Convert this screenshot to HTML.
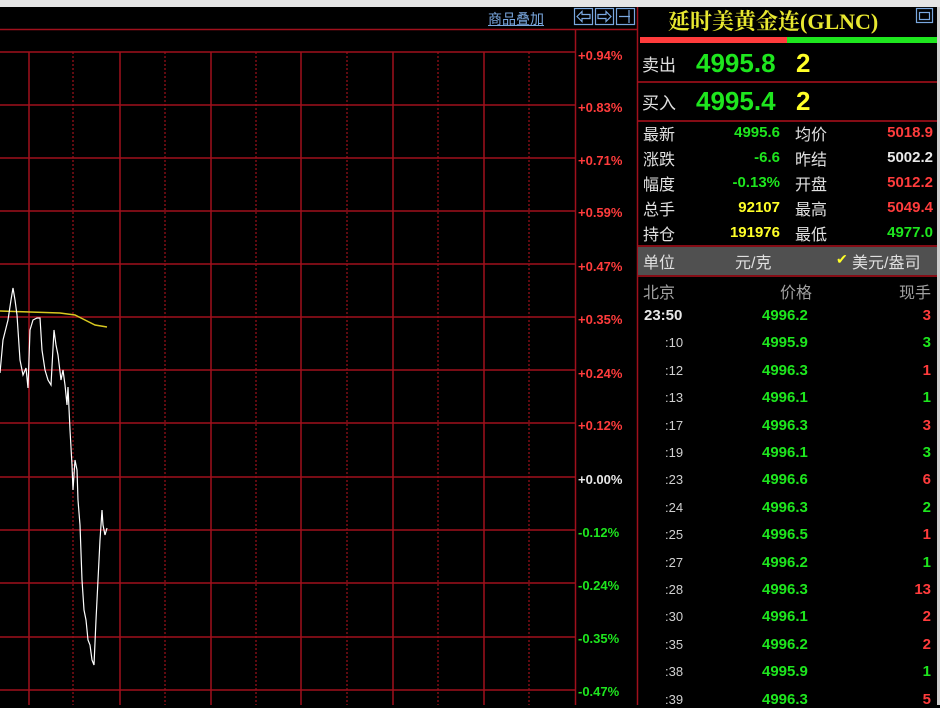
<!DOCTYPE html>
<html><head><meta charset="utf-8"><style>
body{margin:0;width:940px;height:705px;background:#000;overflow:hidden;position:relative;font-family:"Liberation Sans","Noto Sans CJK SC",sans-serif}
.a{position:absolute;white-space:nowrap}
.lbl{position:absolute;left:578px;font-size:13px;font-weight:bold}
.r{color:#ff3c3c}.g{color:#1ee61e}.y{color:#ffff28}.w{color:#e8e8e8}
.row{position:absolute;left:640px;width:295px;height:25px;font-size:16px;color:#e0e0e0}
.tk{position:absolute;left:640px;width:295px;font-size:15px;font-weight:bold}
</style></head><body>
<div class="a" style="left:0;top:0;width:940px;height:7px;background:#e6e6e6"></div>
<div class="a" style="left:937px;top:7px;width:3px;height:698px;background:#cfcfcf"></div>
<svg class="a" style="left:0;top:0" width="940" height="705">
<g stroke="#a0101c" stroke-width="1.5">
<line x1="0" y1="29.5" x2="637" y2="29.5"/>
<line x1="575.5" y1="29" x2="575.5" y2="705"/>
<line x1="637.5" y1="7" x2="637.5" y2="705"/>
<line x1="0" y1="52" x2="575" y2="52"/><line x1="0" y1="105" x2="575" y2="105"/><line x1="0" y1="158" x2="575" y2="158"/><line x1="0" y1="211" x2="575" y2="211"/><line x1="0" y1="264" x2="575" y2="264"/><line x1="0" y1="317" x2="575" y2="317"/><line x1="0" y1="370" x2="575" y2="370"/><line x1="0" y1="423" x2="575" y2="423"/><line x1="0" y1="477" x2="575" y2="477"/><line x1="0" y1="530" x2="575" y2="530"/><line x1="0" y1="583" x2="575" y2="583"/><line x1="0" y1="637" x2="575" y2="637"/><line x1="0" y1="690" x2="575" y2="690"/>
<line x1="29" y1="52" x2="29" y2="705"/><line x1="120" y1="52" x2="120" y2="705"/><line x1="211" y1="52" x2="211" y2="705"/><line x1="301" y1="52" x2="301" y2="705"/><line x1="393" y1="52" x2="393" y2="705"/><line x1="484" y1="52" x2="484" y2="705"/>
</g>
<g stroke="#a0101c" stroke-width="1.2" stroke-dasharray="2,2">
<line x1="73" y1="52" x2="73" y2="705"/><line x1="165" y1="52" x2="165" y2="705"/><line x1="256" y1="52" x2="256" y2="705"/><line x1="347" y1="52" x2="347" y2="705"/><line x1="438" y1="52" x2="438" y2="705"/><line x1="529" y1="52" x2="529" y2="705"/>
</g>
<polyline fill="none" stroke="#d8c820" stroke-width="1.5" points="0,311 60,313 75,315 85,320 95,325 107,327"/>
<polyline fill="none" stroke="#fff" stroke-width="1.2" points="0,373 3,340 8,320 11,300 13,288 15,300 17,315 20,360 23,375 26,368 28,388 30,330 33,320 37,318 40,318 42,350 45,370 48,380 51,385 54,330 56,345 58,355 61,380 63,370 65,385 67,405 68,387 70,430 72,465 73,490 75,460 77,470 78,500 80,525 82,580 84,610 86,620 88,640 90,645 92,660 94,665 96,620 98,580 100,540 102,510 103,525 105,535 107,528"/>
<g stroke="#b0101c" stroke-width="1.5">
<line x1="638" y1="82" x2="937" y2="82"/><line x1="638" y1="121" x2="937" y2="121"/><line x1="638" y1="246" x2="937" y2="246"/><line x1="638" y1="276" x2="937" y2="276"/>
</g>
<g fill="none" stroke="#7aa8e0" stroke-width="1.2">
<rect x="574.5" y="8.5" width="18" height="16"/><rect x="595.5" y="8.5" width="18" height="16"/><rect x="616.5" y="8.5" width="18" height="16"/>
<path d="M577 16.5l5-5v3h8v4h-8v3z M611 16.5l-5-5v3h-8v4h8v3z M619 16.5h11M629 10v13"/>
<rect x="916.5" y="8.5" width="16" height="14"/><rect x="919.5" y="12.5" width="10" height="7"/>
</g>
<rect x="640" y="37" width="147" height="6" fill="#ff3c3c"/><rect x="787" y="37" width="150" height="6" fill="#1ee61e"/>
<rect x="638" y="247" width="299" height="28" fill="#505050"/>
</svg>
<div class="a" style="left:488px;top:9px;font-size:14px;color:#7aa8e0;text-decoration:underline">商品叠加</div>
<div class="a" style="left:668px;top:5px;font-size:22px;color:#e8e830;font-family:'Liberation Serif','Noto Serif CJK SC',serif;font-weight:bold">延时美黄金连(GLNC)</div>
<div class="lbl r" style="top:48px">+0.94%</div><div class="lbl r" style="top:100px">+0.83%</div><div class="lbl r" style="top:153px">+0.71%</div><div class="lbl r" style="top:205px">+0.59%</div><div class="lbl r" style="top:259px">+0.47%</div><div class="lbl r" style="top:312px">+0.35%</div><div class="lbl r" style="top:366px">+0.24%</div><div class="lbl r" style="top:418px">+0.12%</div><div class="lbl w" style="top:472px">+0.00%</div><div class="lbl g" style="top:525px">-0.12%</div><div class="lbl g" style="top:578px">-0.24%</div><div class="lbl g" style="top:631px">-0.35%</div><div class="lbl g" style="top:684px">-0.47%</div>
<div class="a" style="left:642px;top:51px;font-size:17px;color:#e0e0e0">卖出</div>
<div class="a g" style="left:696px;top:48px;font-size:26px;font-weight:bold">4995.8</div>
<div class="a y" style="left:796px;top:48px;font-size:26px;font-weight:bold">2</div>
<div class="a" style="left:642px;top:89px;font-size:17px;color:#e0e0e0">买入</div>
<div class="a g" style="left:696px;top:86px;font-size:26px;font-weight:bold">4995.4</div>
<div class="a y" style="left:796px;top:86px;font-size:26px;font-weight:bold">2</div>
<div class="row" style="top:121px"><span class="a" style="left:3px">最新</span><span class="a g" style="right:155px;font-size:15px;font-weight:bold;top:3px">4995.6</span><span class="a" style="left:155px">均价</span><span class="a r" style="right:2px;font-size:15px;font-weight:bold;top:3px">5018.9</span></div>
<div class="row" style="top:146px"><span class="a" style="left:3px">涨跌</span><span class="a g" style="right:155px;font-size:15px;font-weight:bold;top:3px">-6.6</span><span class="a" style="left:155px">昨结</span><span class="a w" style="right:2px;font-size:15px;font-weight:bold;top:3px">5002.2</span></div>
<div class="row" style="top:171px"><span class="a" style="left:3px">幅度</span><span class="a g" style="right:155px;font-size:15px;font-weight:bold;top:3px">-0.13%</span><span class="a" style="left:155px">开盘</span><span class="a r" style="right:2px;font-size:15px;font-weight:bold;top:3px">5012.2</span></div>
<div class="row" style="top:196px"><span class="a" style="left:3px">总手</span><span class="a y" style="right:155px;font-size:15px;font-weight:bold;top:3px">92107</span><span class="a" style="left:155px">最高</span><span class="a r" style="right:2px;font-size:15px;font-weight:bold;top:3px">5049.4</span></div>
<div class="row" style="top:221px"><span class="a" style="left:3px">持仓</span><span class="a y" style="right:155px;font-size:15px;font-weight:bold;top:3px">191976</span><span class="a" style="left:155px">最低</span><span class="a g" style="right:2px;font-size:15px;font-weight:bold;top:3px">4977.0</span></div>
<div class="row" style="top:249px"><span class="a" style="left:3px">单位</span><span class="a" style="left:95px">元/克</span><span class="a y" style="left:196px;font-size:14px;top:2px">✔</span><span class="a" style="left:212px">美元/盎司</span></div>
<div class="row" style="top:279px;color:#a0a0a0"><span class="a" style="left:3px">北京</span><span class="a" style="left:140px">价格</span><span class="a" style="right:4px">现手</span></div>
<div id="t"></div>
<script>
var d=[["23:50","4996.2","3","r"],[":10","4995.9","3","g"],[":12","4996.3","1","r"],[":13","4996.1","1","g"],[":17","4996.3","3","r"],[":19","4996.1","3","g"],[":23","4996.6","6","r"],[":24","4996.3","2","g"],[":25","4996.5","1","r"],[":27","4996.2","1","g"],[":28","4996.3","13","r"],[":30","4996.1","2","r"],[":35","4996.2","2","r"],[":38","4995.9","1","g"],[":39","4996.3","5","r"]];
var h="";d.forEach(function(r,i){var y=307+i*27.4;var t=i==0?'<span class="a w" style="left:4px;font-size:15px">'+r[0]+'</span>':'<span class="a" style="left:25px;font-size:13px;font-weight:normal;color:#d0d0d0;top:1px">'+r[0]+'</span>';
h+='<div class="tk" style="top:'+y+'px">'+t+'<span class="a g" style="left:122px">'+r[1]+'</span><span class="a '+r[3]+'" style="right:4px">'+r[2]+'</span></div>';});
document.getElementById("t").innerHTML=h;
</script>
</body></html>
